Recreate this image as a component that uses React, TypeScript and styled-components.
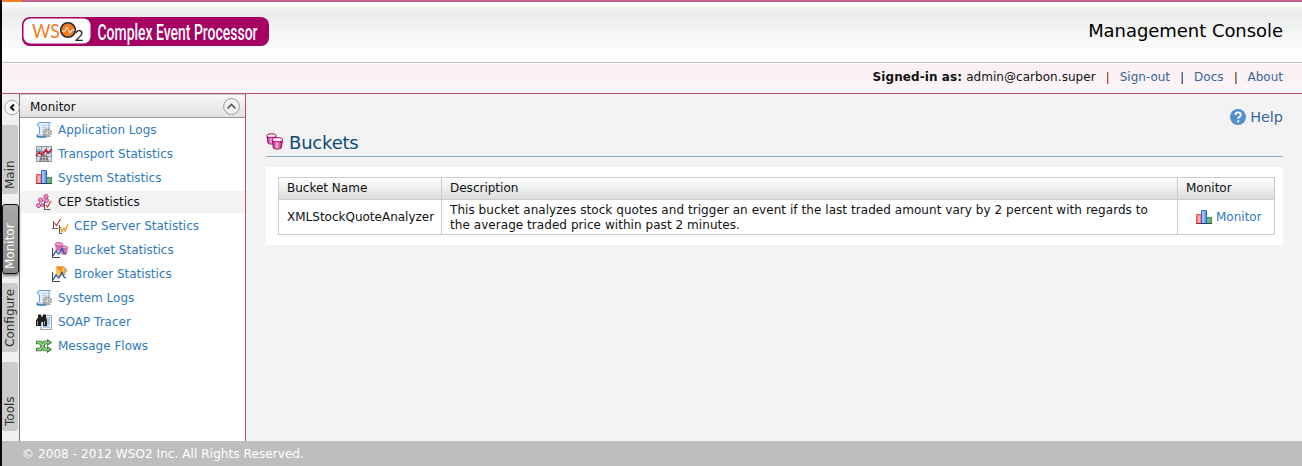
import React from "react";
import styled, { createGlobalStyle } from "styled-components";

const Global = createGlobalStyle`
  * { box-sizing: border-box; }
  body { margin: 0; background: #f3f3f3; color: #111; font: 12px/15px "DejaVu Sans", sans-serif; }
  svg { display: block; flex: none; overflow: visible; }
`;
const Frame = styled.div`
  height: 466px; border-left: 2px solid #08050d; display: flex; flex-direction: column; overflow: hidden;
`;
const TopStripe = styled.div`
  height: 2px; flex: none; background: linear-gradient(90deg, #f47b20 20px, #c5638f 20px);
`;
const Header = styled.header`
  height: 61px; flex: none; display: flex; justify-content: space-between; padding: 14px 19px 0 20px;
  border-bottom: 1px solid #bfc2c1;
  background: linear-gradient(#ffffff 0, #e9ecea 11px, #f4f5f4 30px, #ffffff 55px);
`;
const ConsoleTitle = styled.div`
  font-size: 18px; line-height: 22px; padding-top: 4px; color: #000; letter-spacing: -.05px;
`;
const UserBar = styled.div`
  height: 31px; flex: none; display: flex; justify-content: flex-end; align-items: center;
  padding: 0 19px 3px 0; border-top: 1px solid #fff; border-bottom: 1px solid #b94d80;
  background: linear-gradient(#fbeff4, #faf6f8);
  b { letter-spacing: .08px; }
`;
const UserName = styled.span`letter-spacing: .05px; padding-left: 4px;`;
const UserLink = styled.a`color: #386698;`;
const Divider = styled.i<{ $left: string; $right: string }>`
  width: 2px; height: 12px; margin: 2px 11px 0;
  background: linear-gradient(90deg, ${p => p.$left} 1px, ${p => p.$right} 1px);
`;
const Body = styled.div`height: 347px; flex: none; display: flex;`;
const TabStrip = styled.nav`
  width: 18px; background: #f0f0f0; border-right: 1px solid #777; padding-top: 5px;
  display: flex; flex-direction: column;
`;
const Tab = styled.div<{ $active?: boolean }>`
  width: ${p => (p.$active ? 17 : 16)}px; height: ${p => (p.$active ? 70 : 69)}px;
  margin-bottom: ${p => (p.$active ? 9 : 10)}px;
  flex: none; writing-mode: vertical-rl; transform: rotate(180deg);
  line-height: ${p => (p.$active ? 15 : 17)}px;
  padding-top: ${p => (p.$active ? 4 : 5)}px;
  border: ${p => (p.$active ? "1px solid #111" : "0")};
  border-radius: ${p => (p.$active ? "3px" : "3px 0 0 3px")};
  color: ${p => (p.$active ? "#fff" : "#333")};
  background: ${p => (p.$active ? "linear-gradient(#888, #aaa)" : "#cbcbcb")};
  box-shadow: ${p => (p.$active ? "0 -2px 3px #777" : "none")};
`;
const Collapse = styled.div`height: 26px; flex: none; padding-left: 2px;`;
const Menu = styled.aside`width: 226px; background: #fff; border-right: 1px solid #b94d80;`;
const MenuHead = styled.div`
  height: 24px; display: flex; align-items: center; justify-content: space-between;
  padding: 1px 5px 0 10px; border-bottom: 1px solid #999; border-top: 1px solid #ccc;
  background: linear-gradient(#f8f8f8, #e0e1e1); margin-bottom: 1px; color: #111;
  span { padding-top: 2px; }
`;
const MenuItem = styled.a<{ $sub?: boolean; $active?: boolean }>`
  height: 22px; margin-bottom: 2px; padding-left: ${p => (p.$sub ? 32 : 16)}px;
  display: flex; align-items: center; gap: 6px;
  color: ${p => (p.$active ? "#111" : "#2f7abd")}; background: ${p => (p.$active ? "#f3f3f3" : "transparent")};
`;
const Content = styled.main`flex: 1; padding: 0 19px 0 20px;`;
const Help = styled.a`
  height: 32px; padding-top: 14px; display: flex; justify-content: flex-end; align-items: center; gap: 4px;
  font-size: 14.4px; line-height: 18px; color: #386698;
`;
const PageTitle = styled.h2`
  margin: 0 0 10px; height: 31px; display: flex; align-items: center; gap: 6px; padding-top: 3px;
  font-size: 18px; font-weight: 400; line-height: 24px; letter-spacing: -.2px;
  color: #0b4a7a; border-bottom: 1px solid #94a8ca;
  svg { margin-bottom: 2px; }
`;
const Panel = styled.section`height: 78px; background: #fff; padding: 10px 8px 0 12px;`;
const Table = styled.table`
  width: 997px; height: 58px; table-layout: fixed; border-collapse: collapse; color: #111;
  th, td { border: 1px solid #ccc; padding: 1px 8px 0; text-align: left; font-weight: 400; }
  thead tr { height: 22px; background: linear-gradient(#ffffff, #d9dbdc); }
  th { padding: 0 8px 1px; }
  tbody tr { height: 35px; }
  td:first-child { padding-right: 0; }
  td:nth-child(2) { letter-spacing: .055px; padding-right: 20px; }
`;
const CellLink = styled.a`display: flex; align-items: center; gap: 4px; padding-left: 10px; color: #2f7abd;`;
const Footer = styled.footer`
  height: 25px; flex: none; background: #bebebe; color: #fff; line-height: 26px; padding-left: 20px;
  letter-spacing: .08px;
`;

const Svg = ({ children }: { children: React.ReactNode }) => (
  <svg width="16" height="16" viewBox="0 0 16 16" fill="none">{children}</svg>
);
const LogIcon = () => (
  <Svg>
    <path d="M3.500.5h11c-2 1-1.500 3-1.500 5v8.500H1.500C0 12.500 2 12.500 3.500 11.500V5" fill="#e3f0fd" stroke="#6aa3da" />
    <path d="M3.500.5c-2.500 0-2.500 4 0 4.500v6.500" fill="#b9d8f5" stroke="#5b98d2" />
    <path d="M.8 13.500c.4 1.500 1 1.500 2 1.500h7" stroke="#2f72b8" strokeWidth="1.500" />
    <path d="M6 3.500h5M6 5.500h5M6 7.500h2" stroke="#b5d3ef" />
    <circle cx="11.300" cy="10.800" r="4" stroke="#8b8b8b" strokeWidth="1.400" strokeDasharray="1.700 1.440" />
    <circle cx="11.300" cy="10.800" r="3.300" fill="#d2d2d2" stroke="#949494" strokeWidth=".8" />
    <circle cx="11.300" cy="10.800" r="1.400" fill="#fff" stroke="#7b7b7b" strokeWidth=".7" />
  </Svg>
);
const TransportIcon = () => (
  <Svg>
    <path d="M0 0h16v16H0z" fill="#dadfe5" />
    <path d="M.5 0v16M5.5 0v16M10.5 0v16M15.5 0v16M0 .5h16M0 5.5h16M0 10.5h16M0 15.5h16" stroke="#8f99a6" />
    <path d="M4 16c0-5 2-7 4-7s4 2 4 7M8 9v7M4 13h8" stroke="#666" />
    <path d="M0 6l3-3 3 4 4-4 3 5 3-3" stroke="#5784be" />
    <path d="M0 10l3-4 3 3 4-5 2 3 4-4" stroke="#cc2230" strokeWidth="1.700" />
  </Svg>
);
const BarsIcon = () => (
  <Svg>
    <path d="M.5 4.500h5v9h-5z" fill="#ff8080" stroke="#f05050" />
    <path d="M10.500 7.500h5v6h-5z" fill="#72b477" stroke="#3f8a50" />
    <path d="M5.500.5h5v13h-5z" fill="#5f98ea" stroke="#2c66cc" />
    <path d="M6 1h2.500v12H6z" fill="#9cc2f7" /><path d="M2 6h2v6.500H2z" fill="#ffb0b0" />
    <path d="M0 13.500h5" stroke="#a61c28" /><path d="M5 13.500h6" stroke="#123b90" /><path d="M11 13.500h5" stroke="#245c35" />
  </Svg>
);
const CepIcon = () => (
  <Svg>
    <path d="M9.500 2.500L4 7.500l-1 5M10 6.500L7 11M4 7.500l6-1" stroke="#c4559a" />
    <g fill="#ec9cc8" stroke="#bf3f88"><circle cx="10" cy="2.500" r="2" /><circle cx="4.500" cy="6" r="2" /><circle cx="10.500" cy="6.500" r="2" /><circle cx="2.500" cy="11.500" r="2" /><circle cx="6.500" cy="11" r="1.500" /></g>
    <path d="M8.500 8v7.500h6" stroke="#555" /><path d="M10 11l1.500 2L15 7" stroke="#d02b32" strokeWidth="1.200" />
  </Svg>
);
const Axis = () => <path d="M.5 6v9.500H8M0 12.500h1" stroke="#444" />;
const ServerIcon = () => (
  <Svg>
    <path d="M1.500 3v7.500H6M7.500 7v8.500H10M0 10.500h1" stroke="#555" />
    <path d="M2.500 5l2 2.500L8.500 1" stroke="#c9303a" strokeWidth="1.200" />
    <path d="M8.500 9l1.500 5 2-4 1 3 3-7" stroke="#f09a28" strokeWidth="1.200" />
  </Svg>
);
const Wave = () => <path d="M1 14l3-5 3 3 3-6 2 5 2 1" stroke="#2456ae" strokeWidth="1.300" />;
const BucketStatIcon = () => (
  <Svg>
    <path d="M3 2h8l-1 7H4zM8 5h8l-1 7c-2 1-4 1-6 0z" fill="#d873ab" />
    <ellipse cx="7" cy="2.300" rx="4" ry="1.700" fill="#f0a6cc" stroke="#c95897" />
    <ellipse cx="12" cy="5.500" rx="3.600" ry="1.500" fill="#eba3c8" stroke="#c95897" />
    <Axis /><Wave />
  </Svg>
);
const BrokerIcon = () => (
  <Svg>
    <path d="M4 .5h8l3 3.500-3 6H4z" fill="#fcc34e" /><path d="M12 .5L15.500 4 12 10z" fill="#c9ad80" />
    <path d="M4 .5l4 5 4-5z" fill="#f58220" /><Axis /><Wave />
  </Svg>
);
const TracerIcon = () => (
  <Svg>
    <path d="M6.500 1.500h9v14H4.500z" fill="#edf4fb" stroke="#9aa7b5" />
    <path d="M10 4h4M10 6h4M10 8h4M10 10h4M7 13h7" stroke="#6c9dce" />
    <path d="M2 .5h3v2h2v-2h3v3l1 3v5.500H7V8H5v4H0V6.500l2-3z" fill="#202020" />
    <path d="M1.500 7v4M8.500 7v4" stroke="#999" />
  </Svg>
);
const FlowIcon = () => (
  <Svg>
    <path d="M0 4.500h4.500l4 7H12M0 11.500h4.500l4-7H12" stroke="#3a7e3a" strokeWidth="3.600" />
    <path d="M11 1l5 3.500-5 3.500zM11 8l5 3.500-5 3.500z" fill="#2b6b2b" />
    <path d="M1 4.500h3.500l4 7H12M1 11.500h3.500l4-7H12" stroke="#8fcf80" strokeWidth="1.800" />
    <path d="M12 3l2.500 1.500L12 6zM12 10l2.500 1.500L12 13z" fill="#8fcf80" />
  </Svg>
);
const BucketsIcon = () => (
  <svg width="17" height="17" viewBox="0 0 17 17" fill="none">
    <linearGradient id="pail"><stop stopColor="#b0056a" /><stop offset=".45" stopColor="#eeb5d3" /><stop offset="1" stopColor="#b0056a" /></linearGradient>
    <path d="M1 3l1 7c1.500 1.500 4 1.500 6 0l2-7z" fill="url(#pail)" stroke="#b0056a" />
    <ellipse cx="5.500" cy="2.700" rx="4.800" ry="2" fill="#f9e6f0" stroke="#b0056a" />
    <path d="M6.300 7l1 8c2 1.500 6 1.500 8 0l1.200-8z" fill="url(#pail)" stroke="#b0056a" />
    <ellipse cx="11.400" cy="6.700" rx="5.100" ry="2.100" fill="#f9e6f0" stroke="#b0056a" />
  </svg>
);
const HelpIcon = () => (
  <svg width="16" height="16" viewBox="0 0 16 16" fill="none">
    <circle cx="8" cy="8" r="8" fill="#5190cf" />
    <path d="M5.300 6c0-3.500 5.500-3.300 5.500-.3 0 2-2.600 2-2.600 4" stroke="#fff" strokeWidth="1.900" />
    <path d="M7.200 11.300h2v2h-2z" fill="#fff" />
  </svg>
);
const Logo = () => (
  <svg width="247" height="30" viewBox="0 0 247 30" fill="none">
    <rect y="1" width="247" height="29" rx="8" fill="#a50062" />
    <rect x="1.500" y="2.500" width="67" height="25" rx="7" fill="#fff" />
    <text x="10" y="21.500" fontFamily="Lato" fontSize="20" fill="#f47b20" textLength="28" lengthAdjust="spacingAndGlyphs">WS</text>
    <circle cx="46" cy="14" r="7.300" fill="#f47b20" stroke="#2b2929" strokeWidth="1.600" />
    <path d="M40 15h3l2-4 3 6 2-3h2.500" stroke="#fff" />
    <text x="52.500" y="25" fontFamily="Lato" fontSize="15.500" fill="#222">2</text>
    <text x="75.500" y="24" fontFamily="Roboto" fontSize="22.500" fontWeight="500" fill="#fff" textLength="160" lengthAdjust="spacingAndGlyphs">Complex Event Processor</text>
  </svg>
);

const items = [
  { name: "Application Logs", Icon: LogIcon },
  { name: "Transport Statistics", Icon: TransportIcon },
  { name: "System Statistics", Icon: BarsIcon },
  { name: "CEP Statistics", Icon: CepIcon, active: true },
  { name: "CEP Server Statistics", Icon: ServerIcon, sub: true },
  { name: "Bucket Statistics", Icon: BucketStatIcon, sub: true },
  { name: "Broker Statistics", Icon: BrokerIcon, sub: true },
  { name: "System Logs", Icon: LogIcon },
  { name: "SOAP Tracer", Icon: TracerIcon },
  { name: "Message Flows", Icon: FlowIcon },
];

export default function App() {
  return (
    <>
      <Global />
      <Frame>
        <TopStripe />
        <Header><Logo /><ConsoleTitle>Management Console</ConsoleTitle></Header>
        <UserBar>
          <b>Signed-in as:</b><UserName>admin@carbon.super</UserName>
          <Divider $left="#a85a38" $right="#e0c0b8" /><UserLink>Sign-out</UserLink>
          <Divider $left="#c9a58c" $right="#47699c" /><UserLink>Docs</UserLink>
          <Divider $left="#c06a35" $right="#8a9abb" /><UserLink>About</UserLink>
        </UserBar>
        <Body>
          <TabStrip>
            <Collapse>
              <svg width="15" height="17" viewBox="0 0 15 17" fill="none">
                <circle cx="8" cy="8.500" r="7.200" fill="#fafafa" stroke="#aaa" />
                <path d="M10 5.500L7 8.500l3 3" stroke="#111" strokeWidth="2" />
              </svg>
            </Collapse>
            <Tab>Main</Tab><Tab $active>Monitor</Tab><Tab>Configure</Tab><Tab>Tools</Tab>
          </TabStrip>
          <Menu>
            <MenuHead>
              <span>Monitor</span>
              <svg width="17" height="17" viewBox="0 0 17 17" fill="none">
                <circle cx="8.500" cy="8.500" r="7.900" fill="#f2f2f2" stroke="#999" />
                <path d="M4.500 10.500l4-4 4 4" stroke="#555" strokeWidth="1.600" />
              </svg>
            </MenuHead>
            {items.map(({ name, Icon, sub, active }) => (
              <MenuItem key={name} $sub={sub} $active={active}><Icon />{name}</MenuItem>
            ))}
          </Menu>
          <Content>
            <Help><HelpIcon />Help</Help>
            <PageTitle><BucketsIcon />Buckets</PageTitle>
            <Panel>
              <Table>
                <colgroup><col style={{ width: 163 }} /><col style={{ width: 736 }} /><col style={{ width: 97 }} /></colgroup>
                <thead><tr><th>Bucket Name</th><th>Description</th><th>Monitor</th></tr></thead>
                <tbody>
                  <tr>
                    <td>XMLStockQuoteAnalyzer</td>
                    <td>This bucket analyzes stock quotes and trigger an event if the last traded amount vary by 2 percent with regards to the average traded price within past 2 minutes.</td>
                    <td><CellLink><BarsIcon />Monitor</CellLink></td>
                  </tr>
                </tbody>
              </Table>
            </Panel>
          </Content>
        </Body>
        <Footer>© 2008 - 2012 WSO2 Inc. All Rights Reserved.</Footer>
      </Frame>
    </>
  );
}
